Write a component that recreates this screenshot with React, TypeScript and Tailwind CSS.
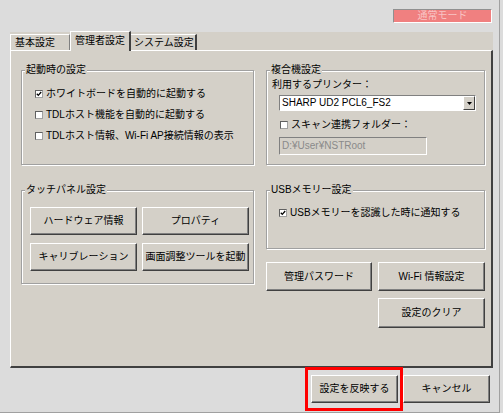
import React from 'react';

const TAN = 'bg-[#d4d0c8]';

const Btn: React.FC<{ label: string; className?: string }> = ({ label, className = '' }) => (
  <button
    className={`flex items-center justify-center ${TAN} border border-t-white border-l-white border-r-[#404040] border-b-[#404040] shadow-[inset_-1px_-1px_0_#808080] text-[10px] leading-[12px] text-black whitespace-nowrap ${className}`}
  >
    {label}
  </button>
);

const Check: React.FC<{ checked?: boolean; label: string; className?: string }> = ({ checked, label, className = '' }) => (
  <div className={`flex items-center h-[12px] gap-[3px] ${className}`}>
    <span className="w-[8px] h-[8px] bg-white border border-t-[#606060] border-l-[#606060] border-r-[#a0a0a0] border-b-[#a0a0a0] flex items-center justify-center">
      {checked && (
        <svg width="6" height="6" viewBox="0 0 6 6">
          <path d="M0.8 2.8 L2.3 4.4 L5.2 1" stroke="#000" strokeWidth="1.3" fill="none" />
        </svg>
      )}
    </span>
    <span className="text-[10px] leading-[12px] text-black whitespace-nowrap">{label}</span>
  </div>
);

const Group: React.FC<{ title: string; className?: string; children?: React.ReactNode }> = ({ title, className = '', children }) => (
  <div className={`relative border border-[#a0a0a0] shadow-[inset_1px_1px_0_#fff,1px_1px_0_#fff] ${className}`}>
    <span className={`absolute -top-[7px] left-[3px] ${TAN} px-[1px] text-[10px] leading-[12px] text-black whitespace-nowrap`}>
      {title}
    </span>
    {children}
  </div>
);

export default function App() {
  return (
    <div className="relative w-[503px] h-[413px] bg-[#dcdcdc] font-['Liberation_Sans','Noto_Sans_CJK_JP',sans-serif] overflow-hidden">
      <div className="w-[500px] h-[413px] border-r border-b border-[#a0a0a0] flex flex-col pl-[10px]">
        {/* top bar */}
        <div className="h-[32px] flex justify-end items-start pt-[9px] pr-[7px]">
          <div className="w-[99px] h-[14px] bg-[#f08080] border border-t-[#909090] border-l-[#909090] border-r-white border-b-white flex items-center justify-center text-[10px] leading-[12px] text-[#f8c4c4]">
            通常モード
          </div>
        </div>

        {/* tab control */}
        <div className={`w-[483px] h-[336px] ${TAN} flex flex-col`}>
          <div className="h-[18px] flex items-end relative z-10">
            <div className="w-[60px] h-[16px] border-t border-l border-white border-r border-r-[#808080] flex items-center pl-[4px] text-[10px] leading-[12px] text-black whitespace-nowrap">
              基本設定
            </div>
            <div className={`w-[61px] h-[20px] -mb-[1px] ${TAN} border-t border-l border-white border-r-2 border-r-[#404040] flex items-start pt-[3px] pl-[4px] text-[10px] leading-[12px] text-black whitespace-nowrap`}>
              管理者設定
            </div>
            <div className="w-[66px] h-[16px] border-t border-white border-r-2 border-r-[#404040] flex items-center pl-[3px] text-[10px] leading-[12px] text-black whitespace-nowrap">
              システム設定
            </div>
          </div>

          <div className="h-[318px] w-[483px] border-t border-l border-white border-r-2 border-r-[#404040] border-b-2 border-b-[#404040] pl-[10px] pt-[19px] flex gap-[12px]">
            {/* left column */}
            <div className="w-[233px] flex flex-col">
              <Group title="起動時の設定" className="h-[95px] pl-[13px] pt-[17px]">
                <div className="flex flex-col gap-[9px]">
                  <Check checked label="ホワイトボードを自動的に起動する" />
                  <Check label="TDLホスト機能を自動的に起動する" />
                  <Check label="TDLホスト情報、Wi-Fi AP接続情報の表示" />
                </div>
              </Group>
              <Group title="タッチパネル設定" className="h-[94px] mt-[25px] pl-[8px] pt-[16px]">
                <div className="grid grid-cols-[107px_107px] grid-rows-[28px_28px] gap-x-[5px] gap-y-[8px]">
                  <Btn label="ハードウェア情報" />
                  <Btn label="プロパティ" />
                  <Btn label="キャリブレーション" />
                  <Btn label="画面調整ツールを起動" />
                </div>
              </Group>
            </div>

            {/* right column */}
            <div className="w-[219px] flex flex-col">
              <Group title="複合機設定" className="h-[95px] pl-[5px] pt-[8px]">
                <div className="text-[10px] leading-[12px] text-black whitespace-nowrap">利用するプリンター：</div>
                <div className="mt-[4px] ml-[7px] w-[197px] h-[16px] bg-white border border-t-[#808080] border-l-[#808080] border-r-white border-b-white flex items-center">
                  <span className="flex-1 pl-[2px] text-[10px] leading-[12px] text-black">SHARP UD2 PCL6_FS2</span>
                  <span className={`w-[12px] h-[14px] ${TAN} border border-t-white border-l-white border-r-[#404040] border-b-[#404040] flex items-center justify-center`}>
                    <svg width="5" height="3" viewBox="0 0 5 3">
                      <path d="M0 0 H5 L2.5 3 Z" fill="#000" />
                    </svg>
                  </span>
                </div>
                <Check label="スキャン連携フォルダー：" className="mt-[8px] ml-[8px]" />
                <div className="mt-[6px] ml-[7px] w-[148px] h-[18px] border border-t-[#808080] border-l-[#808080] border-r-white border-b-white flex items-center pl-[2px] text-[10px] leading-[12px] text-[#8a8a8a]">
                  D:¥User¥NSTRoot
                </div>
              </Group>
              <Group title="USBメモリー設定" className="h-[59px] mt-[25px] pl-[12px] pt-[16px]">
                <Check checked label="USBメモリーを認識した時に通知する" />
              </Group>
              <div className="mt-[13px] grid grid-cols-[106px_107px] gap-x-[6px]">
                <Btn label="管理パスワード" className="h-[29px]" />
                <Btn label="Wi-Fi 情報設定" className="h-[29px]" />
              </div>
              <div className="mt-[7px] flex justify-end">
                <Btn label="設定のクリア" className="w-[107px] h-[30px]" />
              </div>
            </div>
          </div>
        </div>

        {/* bottom buttons */}
        <div className="flex justify-end gap-[5px] pt-[7px] pr-[9px]">
          <Btn label="設定を反映する" className="w-[87px] h-[28px]" />
          <Btn label="キャンセル" className="w-[87px] h-[28px]" />
        </div>
      </div>

      {/* red highlight annotation */}
      <div className="absolute left-[305px] top-[367px] w-[98px] h-[44px] border-[3px] border-[#ff0000] pointer-events-none" />
    </div>
  );
}
